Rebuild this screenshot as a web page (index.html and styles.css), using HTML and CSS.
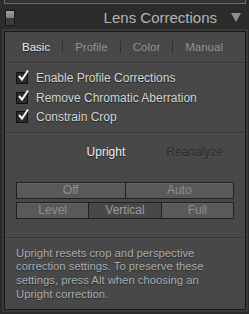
FILE: index.html
```html
<!DOCTYPE html>
<html lang="en">
<head>
  <meta charset="UTF-8" />
  <title>Lens Corrections</title>
  <link rel="stylesheet" href="styles.css">
</head>
<body>

  <div class="prev-panel"></div>

  <header class="panel-head">
    <span class="switch"></span>
    <span class="title">Lens Corrections</span>
    <span class="caret"></span>
  </header>

  <div class="panel">
    <nav class="tabs">
      <span class="tab active">Basic</span>
      <span class="sep"></span>
      <span class="tab">Profile</span>
      <span class="sep"></span>
      <span class="tab">Color</span>
      <span class="sep"></span>
      <span class="tab">Manual</span>
    </nav>

    <div class="section checks">
      <label class="check">
        <span class="box"><svg width="14" height="14" viewBox="0 0 14 14"><path d="M3 7 L6 10.5 L12 1.5" fill="none" stroke="#f2f2f2" stroke-width="2"/></svg></span>
        Enable Profile Corrections
      </label>
      <label class="check">
        <span class="box"><svg width="14" height="14" viewBox="0 0 14 14"><path d="M3 7 L6 10.5 L12 1.5" fill="none" stroke="#f2f2f2" stroke-width="2"/></svg></span>
        Remove Chromatic Aberration
      </label>
      <label class="check">
        <span class="box"><svg width="14" height="14" viewBox="0 0 14 14"><path d="M3 7 L6 10.5 L12 1.5" fill="none" stroke="#f2f2f2" stroke-width="2"/></svg></span>
        Constrain Crop
      </label>
    </div>

    <div class="section upright">
      <div class="upright-head">
        <span class="upright-label">Upright</span>
        <span class="reanalyze">Reanalyze</span>
      </div>
      <div class="btn-row">
        <button class="btn">Off</button>
        <button class="btn">Auto</button>
      </div>
      <div class="btn-row">
        <button class="btn">Level</button>
        <button class="btn on">Vertical</button>
        <button class="btn">Full</button>
      </div>
    </div>

    <p class="section note">Upright resets crop and perspective correction settings. To preserve these settings, press Alt when choosing an Upright correction.</p>
  </div>

</body>
</html>
```

FILE: styles.css
```css
body {
  margin: 0;
  background: #2b2b2b;
  font-family: 'Liberation Sans', Arial, sans-serif;
  color: #cfcfcf;
  width: 249px;
  height: 314px;
  overflow: hidden;
}

.prev-panel {
  height: 3px;
  margin: 0 3px 0 4px;
  border-left: 1px solid #6a6a6a;
  border-right: 1px solid #6a6a6a;
  border-bottom: 1px solid #6a6a6a;
  background: #333;
}

.panel-head {
  display: flex;
  align-items: center;
  height: 27px;
  padding: 0 8px 0 5px;
}

.switch {
  width: 8px;
  height: 14px;
  border: 1px solid #1a1a1a;
  background: linear-gradient(#a0a0a0 0, #7c7c7c 50%, #3a3a3a 50%, #3a3a3a 100%);
}

.title {
  margin-left: auto;
  font-size: 15px;
  color: #b4b4b4;
}

.caret {
  width: 0;
  height: 0;
  margin-left: 14px;
  border-left: 5px solid transparent;
  border-right: 5px solid transparent;
  border-top: 9px solid #8e8e8e;
}

.panel {
  margin: 0 3px 0 4px;
  height: 277px;
  background: #484848;
  border: 1px solid #1a1a1a;
  box-shadow: 0 0 0 2px #3a3a3a;
}

.tabs {
  display: flex;
  align-items: center;
  justify-content: center;
  gap: 12px;
  height: 30px;
  padding-right: 5px;
  font-size: 11.5px;
  color: #929292;
}

.tab.active {
  color: #eeeeee;
  text-shadow: 0 1px 1px #1e1e1e;
}

.sep {
  width: 1px;
  height: 12px;
  background: #2e2e2e;
}

.section {
  border-top: 1px solid #363636;
  box-shadow: inset 0 1px 0 #4e4e4e;
}

.checks {
  display: flex;
  flex-direction: column;
  gap: 5px;
  padding: 8px 0 7px 11px;
}

.check {
  display: flex;
  align-items: center;
  height: 14.5px;
  font-size: 12px;
  color: #d6d6d6;
  text-shadow: 0 1px 1px #222;
}

.box {
  position: relative;
  width: 10px;
  height: 10px;
  margin-right: 8px;
  background: #2a2a2a;
  border: 1px solid #111;
}

.box svg {
  position: absolute;
  left: -1px;
  top: -4px;
}

.upright {
  padding: 0 11px;
  height: 104px;
}

.upright-head {
  display: flex;
  justify-content: flex-end;
  align-items: center;
  gap: 41px;
  height: 38px;
  padding: 0 11px 0 0;
  font-size: 12px;
}

.upright-label {
  color: #f0f0f0;
  text-shadow: 0 1px 1px #222;
}

.reanalyze {
  color: #2c2c2c;
  text-shadow: 0 1px 0 #525252;
}

.btn-row {
  display: flex;
  margin-top: 11px;
}

.btn-row + .btn-row {
  margin-top: 3px;
}

.btn {
  flex: 1;
  height: 17px;
  padding: 0;
  margin: 0;
  background: #595959;
  border: 1px solid #202020;
  border-left-width: 0;
  box-shadow: inset 0 1px 0 #666;
  font-family: inherit;
  font-size: 12px;
  color: #8e8e8e;
  line-height: 14px;
}

.btn:first-child {
  border-left-width: 1px;
}

.btn.on {
  background: #484848;
  box-shadow: none;
  color: #9a9a9a;
}

.note {
  margin: 0;
  padding: 9px 8px 0 11px;
  font-size: 11.3px;
  line-height: 13.7px;
  color: #a6adb4;
  text-shadow: 0 1px 1px #2a2a2a;
}
```
